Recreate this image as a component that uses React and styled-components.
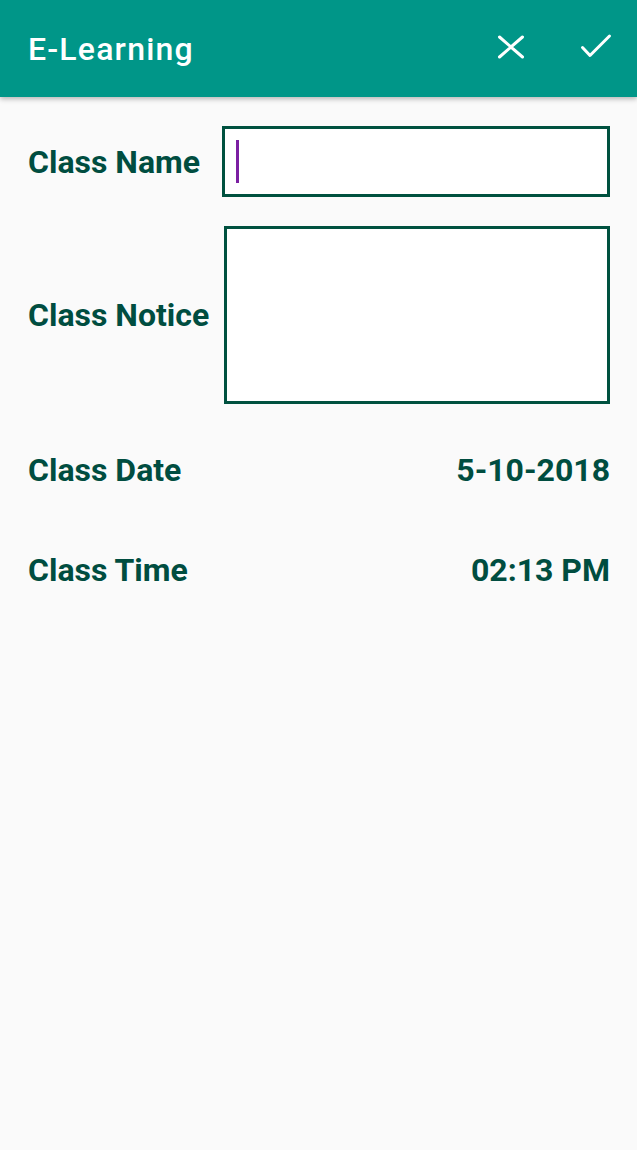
import styled, { createGlobalStyle } from 'styled-components'

const GlobalStyle = createGlobalStyle`
  html, body {
    margin: 0;
    padding: 0;
    background: #fafafa;
  }
  body {
    font-family: 'Roboto', 'Liberation Sans', sans-serif;
  }
`

export default function App() {
  return (
    <Page>
      <GlobalStyle />
      <AppBar>
        <Title>E-Learning</Title>
        <Actions>
          <IconButton aria-label="cancel">
            <svg width="30" height="30" viewBox="0 0 30 30">
              <path d="M3.5 5 L26.5 25 M26.5 5 L3.5 25" stroke="#fff" strokeWidth="3" strokeLinecap="round" fill="none" />
            </svg>
          </IconButton>
          <IconButton aria-label="save">
            <svg width="32" height="30" viewBox="0 0 32 30">
              <path d="M2.5 15.5 L10 23.5 L29.5 4" stroke="#fff" strokeWidth="3" strokeLinecap="round" strokeLinejoin="round" fill="none" />
            </svg>
          </IconButton>
        </Actions>
      </AppBar>

      <Form>
        <FieldRow $labelWidth={194}>
          <Label>Class Name</Label>
          <Box $height={71}>
            <Caret />
          </Box>
        </FieldRow>
        <FieldRow $labelWidth={196} $top={29}>
          <Label>Class Notice</Label>
          <Box $height={178} />
        </FieldRow>
        <InfoRow $top={41}>
          <Label>Class Date</Label>
          <Value>5-10-2018</Value>
        </InfoRow>
        <InfoRow $top={50}>
          <Label>Class Time</Label>
          <Value>02:13 PM</Value>
        </InfoRow>
      </Form>
    </Page>
  )
}

const Page = styled.div`
  min-height: 1150px;
  background: #fafafa;
`

const AppBar = styled.header`
  height: 97px;
  background: #009688;
  display: flex;
  align-items: center;
  justify-content: space-between;
  padding: 0 25px 0 28px;
  box-shadow: 0 2px 5px rgba(0, 0, 0, 0.28);
  position: relative;
  z-index: 1;
`

const Title = styled.h1`
  margin: 0;
  color: #ffffff;
  font-family: 'Roboto', sans-serif;
  font-weight: 500;
  font-size: 32px;
  letter-spacing: 1.2px;
  margin-top: 0;
`

const Actions = styled.div`
  display: flex;
  align-items: center;
  gap: 54px;
`

const IconButton = styled.button`
  border: none;
  background: none;
  padding: 0;
  display: flex;
  cursor: pointer;
  margin-top: -3px;
`

const Form = styled.main`
  padding: 29px 27px 0 28px;
`

const FieldRow = styled.div`
  display: grid;
  grid-template-columns: ${p => p.$labelWidth}px 1fr;
  align-items: center;
  margin-top: ${p => p.$top || 0}px;
`

const Label = styled.span`
  font-family: 'Roboto', sans-serif;
  font-weight: 700;
  font-size: 32px;
  color: #004d40;
  white-space: nowrap;
`

const Box = styled.div`
  height: ${p => p.$height}px;
  box-sizing: border-box;
  border: 3px solid #00513f;
  background: #ffffff;
  display: flex;
  align-items: center;
  padding-left: 11px;
`

const Caret = styled.span`
  width: 3px;
  height: 43px;
  background: #7b1fa2;
`

const InfoRow = styled.div`
  height: 50px;
  display: flex;
  align-items: center;
  justify-content: space-between;
  margin-top: ${p => p.$top}px;
`

const Value = styled(Label)`
  text-align: right;
`
